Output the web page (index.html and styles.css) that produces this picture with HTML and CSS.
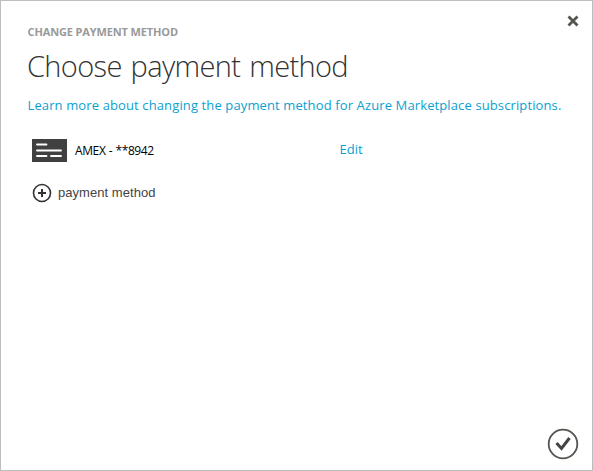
FILE: index.html
```html
<!DOCTYPE html>
<html lang="en">
<head>
<meta charset="utf-8">
<title>Choose payment method</title>
<link rel="stylesheet" href="styles.css">
</head>
<body>
<main class="dialog">
  <header class="top">
    <p class="caption">CHANGE PAYMENT METHOD</p>
    <svg class="close" width="12" height="12" viewBox="0 0 12 12"><path d="M1.500 1.500l9 9M10.500 1.500l-9 9"/></svg>
  </header>
  <h1 class="title">Choose payment method</h1>
  <a class="learn">Learn more about changing the payment method for Azure Marketplace subscriptions.</a>
  <section class="card-row">
    <svg class="card" width="35" height="23" viewBox="0 0 35 23"><path class="plate" d="M0 0h35v23H0z"/><path class="lines" d="M5 5.500h9.500M5 11.500h24M5 17h9.500M19 17h10"/></svg>
    <span class="number">AMEX - **8942</span>
    <a class="edit">Edit</a>
  </section>
  <section class="add-row">
    <svg class="plus" width="20" height="20" viewBox="0 0 20 20"><circle cx="10" cy="10" r="8.500"/><path class="cross" d="M10 6v8M6 10h8"/></svg>
    <span class="add">payment method</span>
  </section>
  <footer class="bottom">
    <svg class="confirm" width="32" height="32" viewBox="0 0 32 32"><circle cx="16" cy="16" r="14.300"/><path d="M9.500 15l5 5.500 8-10.500"/></svg>
  </footer>
</main>
</body>
</html>
```
FILE: styles.css
```css
* { box-sizing: border-box; }
body { margin: 0; background: #fff; }
.dialog {
  width: 593px;
  height: 471px;
  border: 1px solid #bdbdbd;
  padding: 14px 13px 10px 27px;
  display: flex;
  flex-direction: column;
  font-family: "Open Sans", "Noto Sans", sans-serif;
  color: #000;
  white-space: nowrap;
}
.top { display: flex; justify-content: space-between; height: 30px; }
.caption { margin: 9px 0 0 -0.5px; font-size: 11px; line-height: 16px; font-weight: 700; color: #999; letter-spacing: -0.13px; }
.close { stroke: #55554f; stroke-width: 2.8; fill: none; }
.title { margin: 0 0 0 -1px; font-size: 29px; line-height: 42px; font-weight: 300; color: #333; letter-spacing: -0.65px; word-spacing: 2px; }
.learn { margin: 8px 0 0 -0.5px; font-size: 13px; line-height: 20px; color: #0b9fd0; letter-spacing: 0.12px; }
.card-row { display: flex; align-items: center; margin: 24px 0 0 4px; height: 23px; }
.card .plate { fill: #404040; }
.card .lines { stroke: #fff; stroke-width: 1.8; stroke-linecap: round; }
.number { width: 264.5px; margin-left: 8px; font-size: 12px; letter-spacing: -0.38px; word-spacing: 0.5px; }
.edit { margin-bottom: 4px; font-size: 13px; color: #0b9fd0; }
.add-row { display: flex; align-items: center; margin: 20px 0 0 4px; height: 22px; }
.plus { fill: none; stroke: #333; stroke-width: 1.6; }
.plus .cross { stroke-width: 2; }
.add { margin: 0 0 2px 6px; font-size: 13px; color: #444; font-family: "Liberation Sans", sans-serif; letter-spacing: 0.05px; }
.bottom { margin-top: auto; display: flex; justify-content: flex-end; }
.confirm { fill: none; stroke: #55554f; stroke-width: 1.8; }
.confirm path { stroke: #444; stroke-width: 3; }
```
